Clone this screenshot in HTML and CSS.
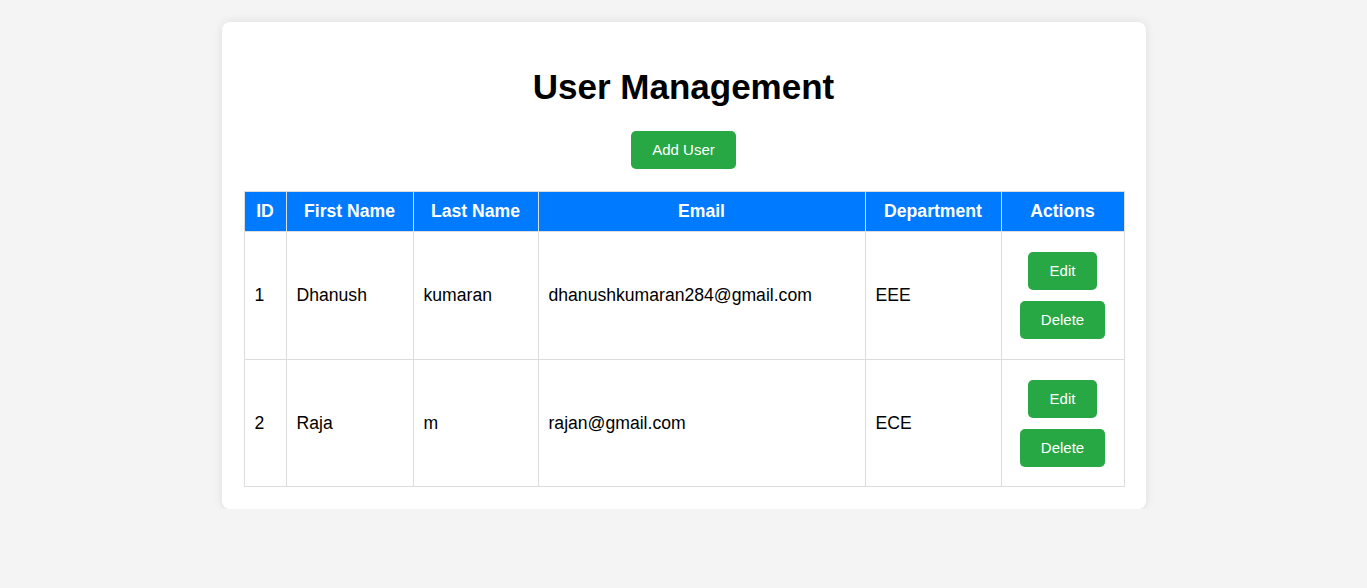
FILE: index.html
```html
<!DOCTYPE html>
<html lang="en">
<head>
<meta charset="UTF-8">
<title>User Management</title>
<link rel="stylesheet" href="styles.css">
</head>
<body>
<div class="container">
  <h1 class="title">User Management</h1>
  <div class="toolbar">
    <button class="btn">Add User</button>
  </div>
  <table class="users">
    <colgroup>
      <col class="c-id">
      <col class="c-first">
      <col class="c-last">
      <col class="c-email">
      <col class="c-dept">
      <col class="c-actions">
    </colgroup>
    <thead>
      <tr>
        <th>ID</th>
        <th>First Name</th>
        <th>Last Name</th>
        <th>Email</th>
        <th>Department</th>
        <th>Actions</th>
      </tr>
    </thead>
    <tbody>
      <tr>
        <td>1</td>
        <td>Dhanush</td>
        <td>kumaran</td>
        <td>dhanushkumaran284@gmail.com</td>
        <td>EEE</td>
        <td class="actions">
          <div class="action-stack">
            <button class="btn btn-edit">Edit</button>
            <button class="btn">Delete</button>
          </div>
        </td>
      </tr>
      <tr>
        <td>2</td>
        <td>Raja</td>
        <td>m</td>
        <td>rajan@gmail.com</td>
        <td>ECE</td>
        <td class="actions">
          <div class="action-stack">
            <button class="btn btn-edit">Edit</button>
            <button class="btn">Delete</button>
          </div>
        </td>
      </tr>
    </tbody>
  </table>
</div>
</body>
</html>
```

FILE: styles.css
```css
* {
  box-sizing: border-box;
}

body {
  margin: 0;
  background: #f4f4f4;
  font-family: "Liberation Sans", Arial, sans-serif;
  color: #000;
}

.container {
  width: 924px;
  margin: 22px auto 0;
  padding: 22px;
  background: #fff;
  border-radius: 8px;
  box-shadow: 0 0 10px rgba(0, 0, 0, 0.1);
}

.title {
  margin: 23px 0 0;
  font-size: 35px;
  line-height: 40px;
  font-weight: bold;
  text-align: center;
}

.toolbar {
  display: flex;
  justify-content: center;
  margin: 24px 0 22px;
}

.btn {
  font-family: "Liberation Sans", Arial, sans-serif;
  font-size: 15px;
  line-height: 18px;
  padding: 10px 21px;
  border: none;
  border-radius: 5px;
  background: #28a745;
  color: #fff;
  cursor: pointer;
}

.btn-edit {
  padding: 10px 22px;
}

.users {
  width: 880px;
  border-collapse: collapse;
  table-layout: fixed;
  font-size: 17.6px;
}

.c-id { width: 42px; }
.c-first { width: 127px; }
.c-last { width: 125px; }
.c-email { width: 327px; }
.c-dept { width: 136px; }
.c-actions { width: 123px; }

.users th,
.users td {
  border: 1px solid #ddd;
  padding: 10px;
  text-align: left;
}

.users th {
  background: #007bff;
  color: #fff;
  font-weight: bold;
  text-align: center;
  line-height: 19px;
}

.users td {
  line-height: 20px;
}

.users td.actions {
  padding: 20px 8px 19.5px;
}

.action-stack {
  display: flex;
  flex-direction: column;
  align-items: center;
  gap: 11px;
}
```
